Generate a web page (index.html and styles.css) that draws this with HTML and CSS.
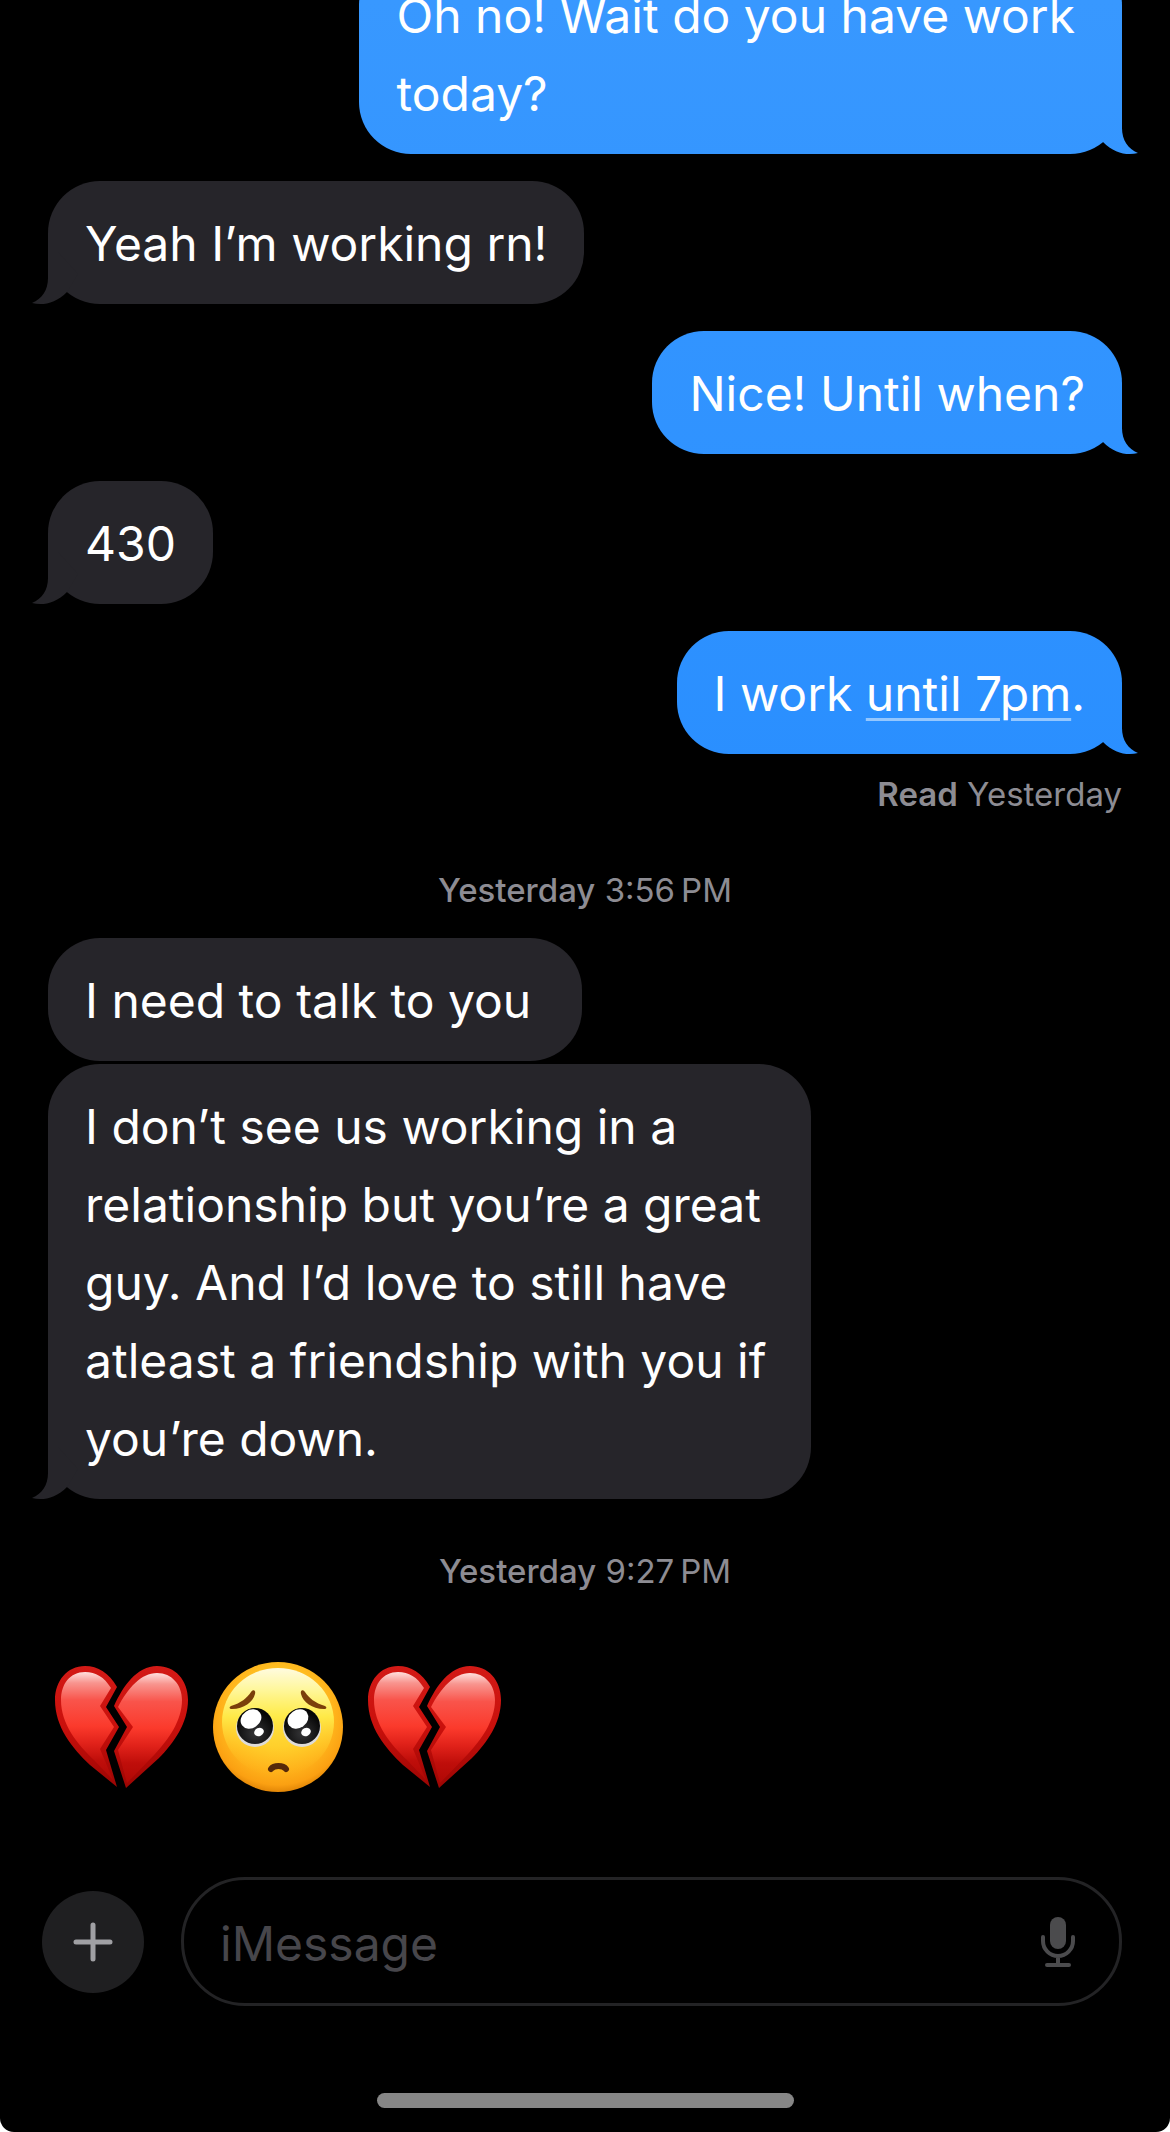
FILE: index.html
```
<!DOCTYPE html>
<html lang="en">
<head>
    <meta charset="UTF-8">
    <meta name="viewport" content="width=device-width, initial-scale=1.0">
    <title>Messages</title>
    <link rel="stylesheet" href="styles.css">
</head>
<body>
    <!-- Conversation -->
    <main class="thread">
        <p class="bubble sent tail">Oh no! Wait do you have work today?</p>
        <p class="bubble received tail">Yeah I’m working rn!</p>
        <p class="bubble sent tail">Nice! Until when?</p>
        <p class="bubble received tail">430</p>
        <p class="bubble sent tail">I work <a href="#">until 7pm</a>.</p>
        <p class="receipt"><b>Read</b> Yesterday</p>

        <p class="timestamp"><b>Yesterday</b> 3:56&#8239;PM</p>
        <p class="bubble received">I need to talk to you&nbsp;</p>
        <p class="bubble received follow tail">I don’t see us working in a relationship but you’re a great guy. And I’d love to still have atleast a friendship with you if you’re down.</p>

        <p class="timestamp late"><b>Yesterday</b> 9:27&#8239;PM</p>
        <div class="emojis">
            <svg class="heart" viewBox="0 0 133 122" role="img" aria-label="Broken heart">
                <defs>
                    <linearGradient id="heartRim" x1="0" y1="0" x2="0" y2="1">
                        <stop offset="0" stop-color="#d31a16"/>
                        <stop offset="0.5" stop-color="#c9100c"/>
                        <stop offset="1" stop-color="#9c0503"/>
                    </linearGradient>
                    <linearGradient id="heartFace" x1="0" y1="0" x2="0" y2="1">
                        <stop offset="0" stop-color="#ffe0de"/>
                        <stop offset="0.1" stop-color="#f8958f"/>
                        <stop offset="0.26" stop-color="#f9544b"/>
                        <stop offset="0.5" stop-color="#fb3a2c"/>
                        <stop offset="0.66" stop-color="#e1221a"/>
                        <stop offset="0.82" stop-color="#bf0e0a"/>
                        <stop offset="1" stop-color="#b00805"/>
                    </linearGradient>
                </defs>
                <g id="brokenHeart">
                    <path fill="url(#heartRim)" d="M62 21C54 7 43 0 30 0 12 0 0 15 0 34c0 27 17 48 35 65l27 22-11-37 13-23-13-20z"/>
                    <path fill="url(#heartRim)" d="M59 40C68 20 82 0 102 0c18 0 31 14 31 34 0 23-14 43-29 58l-33 30-12-37 13-24z"/>
                    <path fill="url(#heartFace)" d="M56 22C49 11 41 6 30 6 15 6 6 18 6 34c0 24 16 44 33 60l19 20-13-31 14-22-14-21z"/>
                    <path fill="url(#heartFace)" d="M63 41C73 22 86 7 102 7c15 0 25 12 25 27 0 21-14 40-27 54l-28 29-9-33 15-23z"/>
                </g>
            </svg>
            <svg class="face" viewBox="0 0 130 130" role="img" aria-label="Pleading face">
                <defs>
                    <radialGradient id="skinRim" cx="0.5" cy="0.4" r="0.62">
                        <stop offset="0.4" stop-color="#ffcf2a"/>
                        <stop offset="0.7" stop-color="#ffb31b"/>
                        <stop offset="0.88" stop-color="#fba012"/>
                        <stop offset="1" stop-color="#d97d03"/>
                    </radialGradient>
                    <linearGradient id="skinTop" x1="0" y1="0" x2="0" y2="1">
                        <stop offset="0" stop-color="#fffbe0"/>
                        <stop offset="0.2" stop-color="#fff79c"/>
                        <stop offset="0.45" stop-color="#ffee4c" stop-opacity="0.9"/>
                        <stop offset="0.75" stop-color="#ffcf2c" stop-opacity="0.4"/>
                        <stop offset="1" stop-color="#ffb41e" stop-opacity="0"/>
                    </linearGradient>
                    <radialGradient id="pupil" cx="0.5" cy="0.7" r="0.6">
                        <stop offset="0" stop-color="#353537"/>
                        <stop offset="1" stop-color="#050505"/>
                    </radialGradient>
                    <g id="eye">
                        <ellipse cx="0" cy="2" rx="19" ry="19" fill="#dedbd8"/>
                        <circle r="18" fill="url(#pupil)"/>
                        <ellipse cx="-4" cy="-7" rx="11" ry="9" fill="#fff" transform="rotate(-35 -4 -7)"/>
                        <ellipse cx="4" cy="6" rx="5" ry="4" fill="#fff" transform="rotate(-25 4 6)"/>
                    </g>
                </defs>
                <circle cx="65" cy="65" r="65" fill="url(#skinRim)"/>
                <ellipse cx="65" cy="60" rx="56" ry="54" fill="url(#skinTop)"/>
                <use href="#eye" x="42" y="64"/>
                <use href="#eye" x="89" y="64"/>
                <path fill="#7b3f0b" d="M18 44c10-3 16-8 20-14 2-3 5-2 4 2-2 8-11 15-23 15-3 0-3-2-1-3z"/>
                <path fill="#7b3f0b" d="M112 44c-10-3-16-8-20-14-2-3-5-2-4 2 2 8 11 15 23 15 3 0 3-2 1-3z"/>
                <path d="M58 107c3-4 12-4 15 0" fill="none" stroke="#56290a" stroke-width="6" stroke-linecap="round"/>
            </svg>
            <svg class="heart" viewBox="0 0 133 122" role="img" aria-label="Broken heart">
                <use href="#brokenHeart"/>
            </svg>
        </div>
    </main>

    <!-- Composer -->
    <form class="composer">
        <button type="button" class="add" aria-label="Add attachment">
            <svg viewBox="0 0 40 40"><path d="M20 3v34M3 20h34"/></svg>
        </button>
        <div class="field">
            <input type="text" id="message" aria-label="Message" placeholder="iMessage">
            <button type="button" class="mic" aria-label="Dictate">
                <svg viewBox="0 0 36 50">
                    <rect x="10" y="0" width="16" height="32" rx="8"/>
                    <path d="M3 20v4a15 15 0 0 0 30 0v-4M18 39v9M7 48h22"/>
                </svg>
            </button>
        </div>
    </form>
    <div class="home-bar"></div>
</body>
</html>
```
FILE: styles.css
```
* {
    box-sizing: border-box;
}
html {
    background: #fff;
}
body {
    display: flex;
    flex-direction: column;
    height: 100vh;
    margin: 0;
    overflow: hidden;
    background: #000;
    border-radius: 0 0 14px 14px;
    color: #fff;
    font-family: Inter, "Liberation Sans", sans-serif;
    font-size: 48px;
    line-height: 78px;
}
p {
    margin: 0;
}
button {
    padding: 0;
    border: 0;
    background: none;
    cursor: pointer;
}

/* newest message stays at the bottom, older ones run off the top */
.thread {
    flex: 1;
    min-height: 0;
    display: flex;
    flex-direction: column;
    justify-content: flex-end;
    padding: 0 48px;
    overflow: hidden;
}
.bubble {
    position: relative;
    flex-shrink: 0;
    max-width: 71%;
    margin-top: 27px;
    padding: 24px 37px 21px;
    border-radius: 52px;
}
.sent {
    align-self: flex-end;
}
.received {
    align-self: flex-start;
}
.received,
.received.tail::after {
    background: #26252a;
}
.sent,
.sent.tail::after {
    background: linear-gradient(#3898ff, #2a8fff 36%, #1f88ff) fixed;
}
.bubble.follow {
    margin-top: 3px;
}
.tail::after {
    content: "";
    position: absolute;
    bottom: 0;
    width: 48px;
    height: 52px;
}
.sent.tail::after {
    right: -16px;
    clip-path: path("M32 0V26C32 38 38 47 48 51C37 54 24 51 13 40L2 22L22 0Z");
}
.received.tail::after {
    left: -16px;
    clip-path: path("M16 0V26C16 38 10 47 0 51C11 54 24 51 35 40L46 22L26 0Z");
}
.bubble a {
    color: inherit;
    text-decoration: underline 3px #94c7ff;
    text-underline-offset: 7px;
}

.receipt,
.timestamp {
    flex-shrink: 0;
    color: #8d8c93;
    font-size: 33px;
    line-height: 40px;
}
.receipt {
    margin-top: 20px;
    text-align: right;
}
.receipt b {
    font-weight: 600;
}
.timestamp {
    margin-top: 56px;
    text-align: center;
}
.timestamp b {
    font-weight: 500;
}
.timestamp + .bubble {
    margin-top: 28px;
}
.timestamp.late {
    margin-top: 52px;
}

.emojis {
    flex-shrink: 0;
    display: flex;
    align-items: center;
    gap: 25px;
    margin: 71px 0 85px;
    padding-left: 7px;
}
.heart {
    width: 133px;
    height: 122px;
}
.face {
    width: 130px;
    height: 130px;
}

.composer {
    display: flex;
    align-items: center;
    gap: 37px;
    padding: 0 48px 0 42px;
}
.add {
    width: 102px;
    height: 102px;
    border-radius: 50%;
    background: #1f1f21;
}
.add svg {
    display: block;
    width: 40px;
    height: 40px;
    margin: auto;
    fill: none;
    stroke: #a0a0a4;
    stroke-width: 5;
    stroke-linecap: round;
}
.field {
    flex: 1;
    display: flex;
    align-items: center;
    height: 129px;
    padding: 0 43px 0 36px;
    border: 3px solid #232325;
    border-radius: 64px;
}
.field input {
    flex: 1;
    min-width: 0;
    height: 80px;
    padding: 3px 0 0;
    border: 0;
    outline: 0;
    background: none;
    color: #fff;
    font: inherit;
}
.field input::placeholder {
    color: #47464b;
    opacity: 1;
}
.mic svg {
    display: block;
    width: 36px;
    height: 50px;
    overflow: visible;
    fill: #4b4b4d;
}
.mic path {
    fill: none;
    stroke: #4b4b4d;
    stroke-width: 4;
    stroke-linecap: round;
}

.home-bar {
    width: 36%;
    max-width: 417px;
    height: 15px;
    margin: 87px auto 24px;
    border-radius: 8px;
    background: #868686;
}
```
